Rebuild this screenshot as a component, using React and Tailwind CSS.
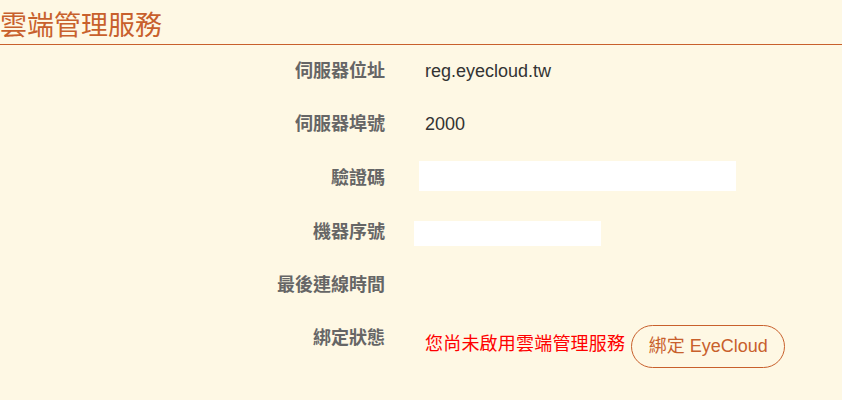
export default function App() {
  const font = { fontFamily: '"Liberation Sans", "Noto Sans CJK TC", sans-serif' };
  return (
    <div className="w-[842px] h-[400px] bg-[#fef8e4] overflow-hidden" style={font}>
      <div className="h-[45px] border-b border-[#c8602c] flex items-center">
        <h1 className="text-[27px] leading-[36px] text-[#c8602c] font-normal mt-[7px]">雲端管理服務</h1>
      </div>
      <div className="flex flex-col text-[18px]">
        <div className="h-[53px] flex items-center">
          <div className="w-[385px] text-right font-bold text-[#666666]">伺服器位址</div>
          <div className="ml-[40px] text-[#333333]">reg.eyecloud.tw</div>
        </div>
        <div className="h-[53px] flex items-center">
          <div className="w-[385px] text-right font-bold text-[#666666]">伺服器埠號</div>
          <div className="ml-[40px] text-[#333333]">2000</div>
        </div>
        <div className="h-[54px] flex items-center">
          <div className="w-[385px] text-right font-bold text-[#666666]">驗證碼</div>
          <div className="ml-[34px] w-[317px] h-[30px] bg-white mt-[-4px]"></div>
        </div>
        <div className="h-[54px] flex items-center">
          <div className="w-[385px] text-right font-bold text-[#666666]">機器序號</div>
          <div className="ml-[29px] w-[187px] h-[25px] bg-white mt-[2px]"></div>
        </div>
        <div className="h-[52px] flex items-center">
          <div className="w-[385px] text-right font-bold text-[#666666]">最後連線時間</div>
        </div>
        <div className="pt-[14px] flex items-start">
          <div className="w-[385px] text-right font-bold text-[#666666] leading-[26px]">綁定狀態</div>
          <div className="ml-[40px] flex items-center">
            <span className="text-[#ff0000] mt-[-4px] tracking-[0.2px]">您尚未啟用雲端管理服務</span>
            <button className="ml-[6px] h-[43px] w-[154px] rounded-full border border-[#c8602c] text-[#c8602c] text-[18px] bg-transparent">綁定 EyeCloud</button>
          </div>
        </div>
      </div>
    </div>
  );
}
